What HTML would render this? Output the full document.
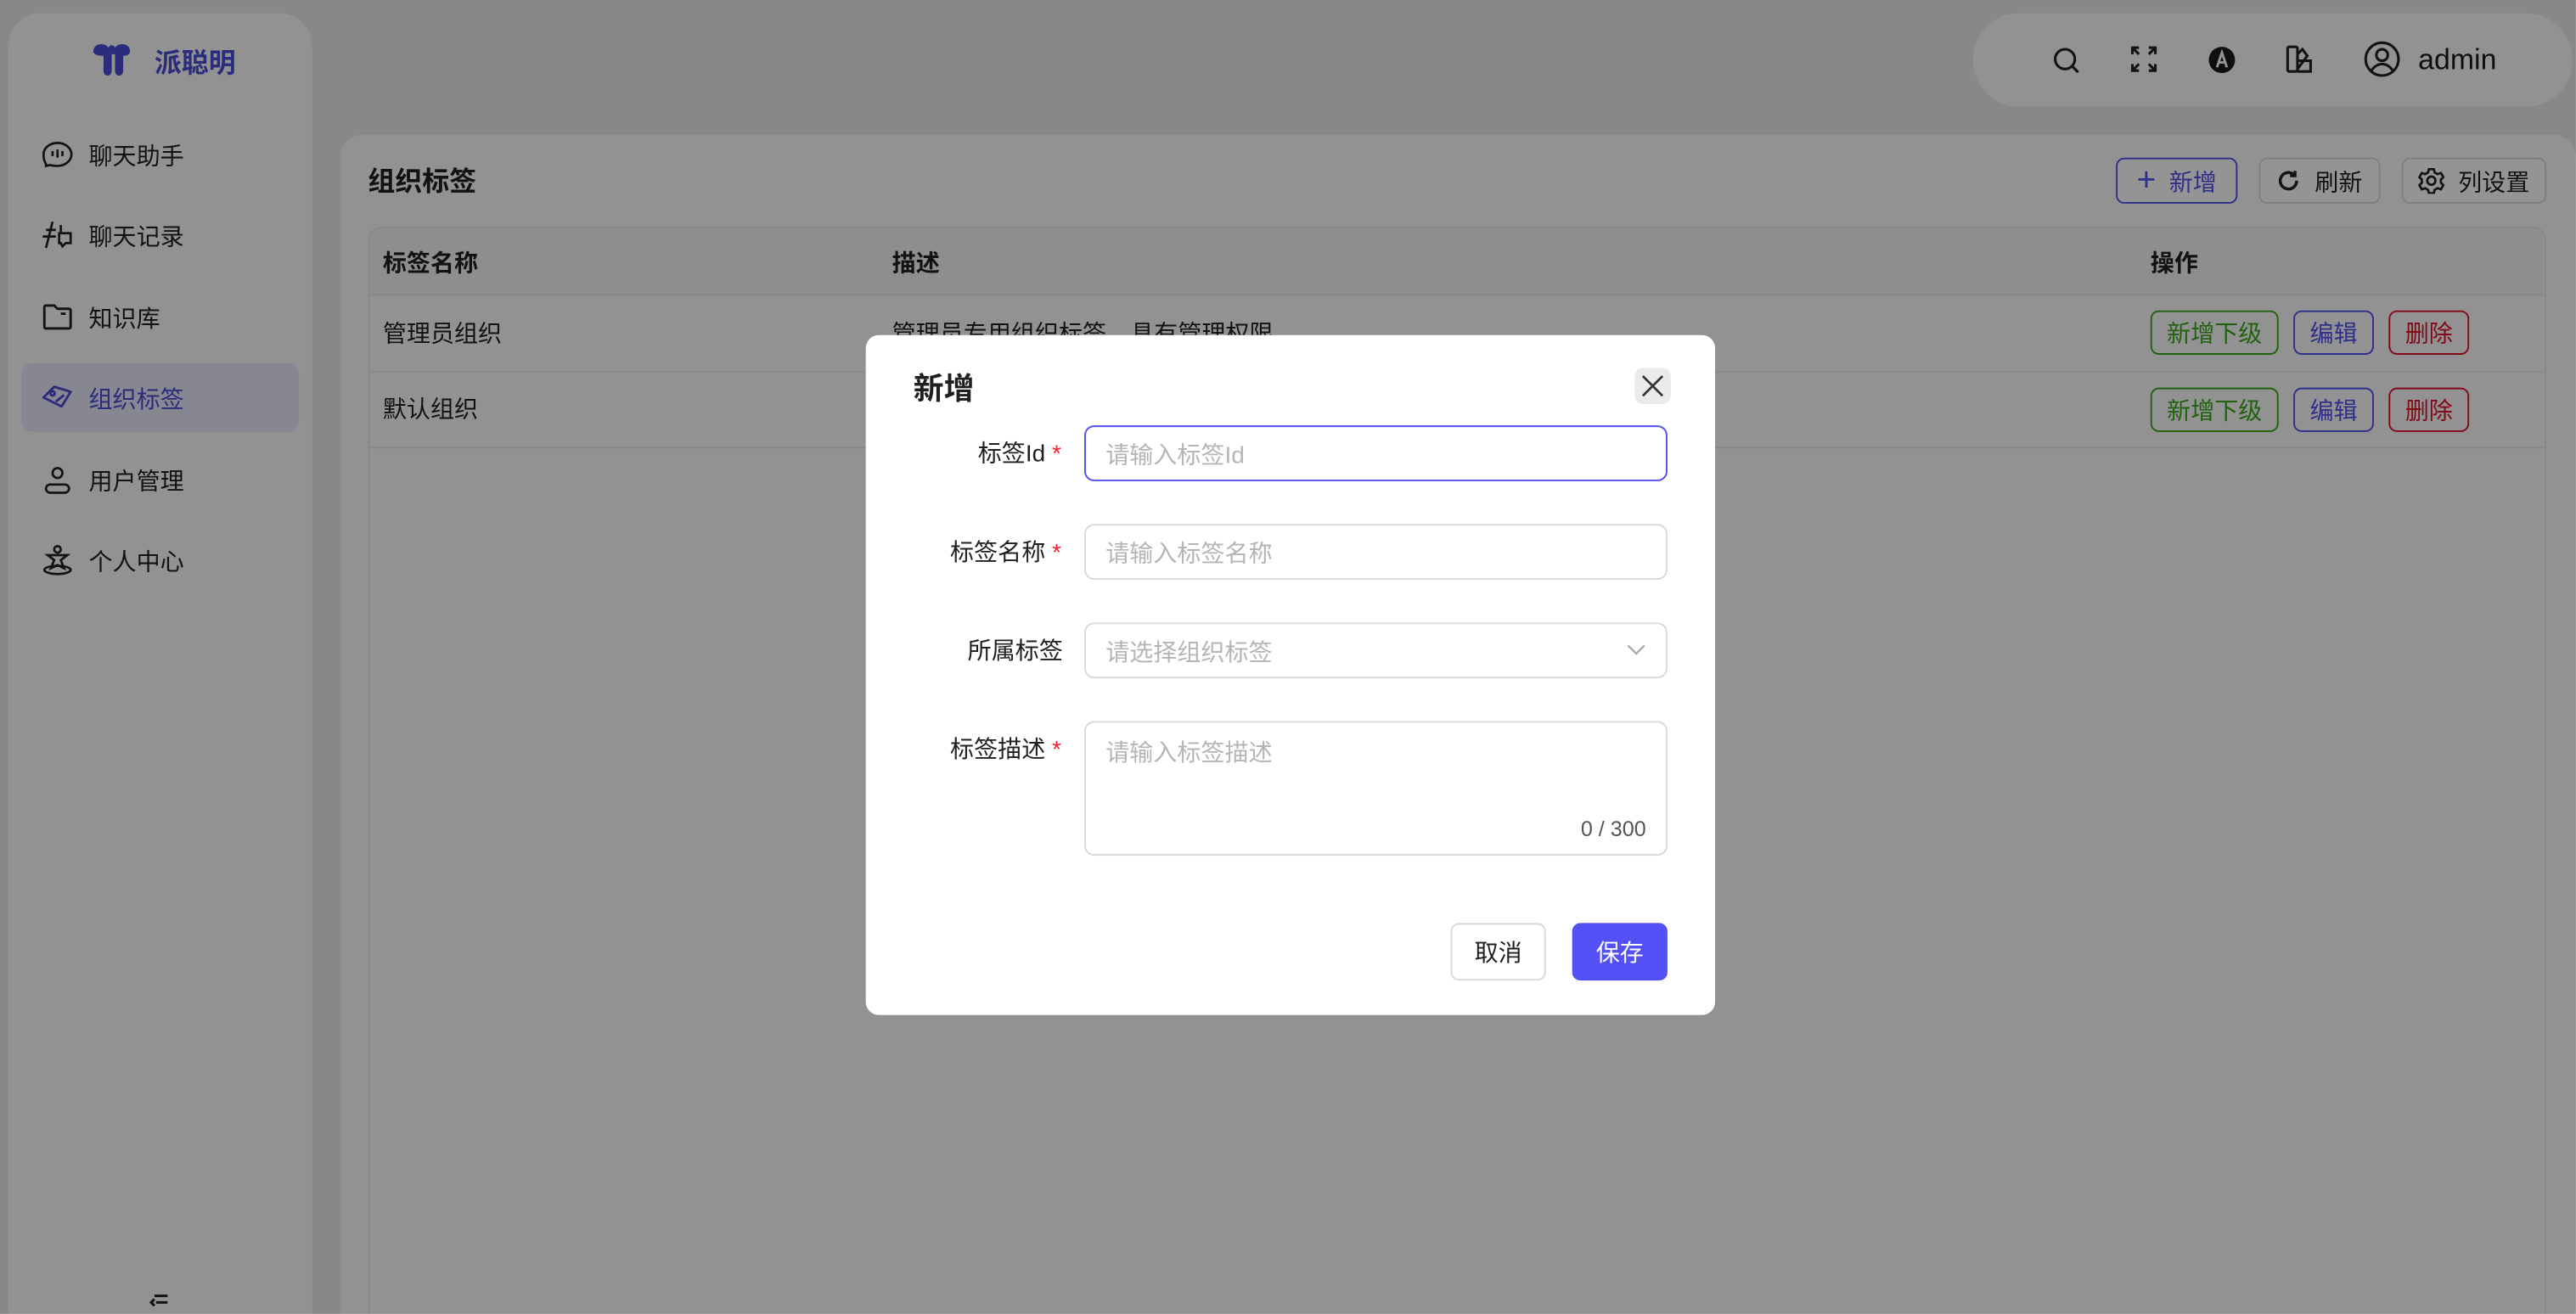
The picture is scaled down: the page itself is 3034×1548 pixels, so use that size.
<!DOCTYPE html>
<html><head><meta charset="utf-8"><style>
*{box-sizing:border-box;margin:0;padding:0}
html,body{width:3034px;height:1548px;overflow:hidden;background:#e9eaee}
body{font-family:"Liberation Sans","Noto Sans CJK SC",sans-serif;color:#1f1f1f;position:relative}
#w{position:absolute;left:0;top:0;width:1568px;height:800px;overflow:hidden;transform:scale(1.9349);transform-origin:0 0}
.a{position:absolute}
.side{left:5px;top:8px;width:185px;height:792px;background:#fcfcfc;border-radius:20px 20px 0 0}
.mi{position:absolute;left:20px;width:160px;height:42px;display:flex;align-items:center;font-size:14.5px}
.mi svg{width:20px;height:20px;margin-right:9px;flex:none}
.hdr{left:1201px;top:8px;width:365px;height:57px;background:#fcfcfc;border-radius:29px}
.card{left:207px;top:82px;width:1361px;height:718px;background:#fcfcfc;border-radius:14px 14px 0 0}
.btn{position:absolute;height:28px;border:1px solid #d9d9d9;border-radius:5px;display:flex;align-items:center;justify-content:center;font-size:14.5px;background:#fff}
.tb{left:224px;top:138px;width:1326px;height:662px;border:1px solid #eaeaea;border-bottom:none;border-radius:8px 8px 0 0;overflow:hidden}
.sb{position:absolute;height:27px;border:1px solid;border-radius:5px;font-size:14.5px;display:flex;align-items:center;justify-content:center}
.mask{left:0;top:0;width:1568px;height:800px;background:rgba(0,0,0,0.42)}
.modal{left:527px;top:204px;width:517px;height:414px;background:#fff;border-radius:8px}
.lb{position:absolute;right:398px;font-size:14.5px;text-align:right}
.lb i{color:#f5222d;font-style:normal;margin-left:4px}
.in{position:absolute;left:133px;width:355px;border:1px solid #d9d9d9;border-radius:6px;font-size:14.5px;color:#b5b5b5;padding-left:12px;display:flex;align-items:center}
</style></head><body><div id="w">
<div class="a side">
  <svg class="a" style="left:50px;top:17px" width="26" height="24" viewBox="0 0 26 24"><path d="M2 5c1-4 7-4 9-1 1-2 3-2 4 0 2-3 8-3 9 1 1 3-2 4-4 4v9c0 4-5 4-5 0V8h-2v10c0 4-5 4-5 0V9C4 9 1 8 2 5z" fill="#4b4fd6"/></svg>
  <div class="a" style="left:89px;top:17px;font-size:16.5px;font-weight:bold;color:#4b4fd6">派聪明</div>
  <div class="mi" style="top:65px"><svg viewBox="0 0 20 20" fill="none" stroke="#222" stroke-width="1.4"><path d="M3 16c-1-2-1.5-3-1.5-6 0-4 4-7 8.5-7s8.5 3 8.5 7-4 7-8.5 7c-2 0-3 0-4.5-.5L3 17z"/><path d="M7 8v3M10 7v5M13 8v3"/></svg>聊天助手</div>
  <div class="mi" style="top:114px"><svg viewBox="0 0 20 20" fill="none" stroke="#222" stroke-width="1.4"><path d="M1 11h8M3 7h6M7 2l-4 16"/><path d="M11 9h7v6h-3l-2 2-1-2h-1zM12 9V4"/></svg>聊天记录</div>
  <div class="mi" style="top:164px"><svg viewBox="0 0 20 20" fill="none" stroke="#222" stroke-width="1.5"><path d="M2 4a1 1 0 011-1h5l2 2h7a1 1 0 011 1v10a1 1 0 01-1 1H3a1 1 0 01-1-1z"/><path d="M12 8h3"/></svg>知识库</div>
  <div class="a" style="left:8px;top:213px;width:169px;height:42px;background:#e7e8f8;border-radius:7px"></div>
  <div class="mi" style="top:213px;color:#4b4fd6"><svg viewBox="0 0 20 20" fill="none" stroke="#4b4fd6" stroke-width="1.5"><path d="M1.5 10L8 3.5l10 3-5.5 9z" stroke-linejoin="round"/><circle cx="7" cy="7.5" r="1.3"/><path d="M9 12.5l5-4"/></svg>组织标签</div>
  <div class="mi" style="top:263px"><svg viewBox="0 0 20 20" fill="none" stroke="#222" stroke-width="1.4"><circle cx="10" cy="6" r="3"/><rect x="3" y="13" width="14" height="5" rx="2.5"/></svg>用户管理</div>
  <div class="mi" style="top:312px"><svg viewBox="0 0 20 20" fill="none" stroke="#222" stroke-width="1.4"><circle cx="10" cy="3.5" r="2"/><path d="M4 7h12l-4 3 2 5-4-2-4 2 2-5z"/><ellipse cx="10" cy="16" rx="8" ry="2.5"/></svg>个人中心</div>
  <svg class="a" style="left:85px;top:779px" width="14" height="12" viewBox="0 0 14 12" fill="none" stroke="#222" stroke-width="1.6"><path d="M4 2h8M5 6h7M4 4L2 6l2 2"/></svg>
</div>
<div class="a hdr">
  <svg class="a" style="left:48px;top:20px" width="18" height="18" viewBox="0 0 18 18" fill="none" stroke="#222" stroke-width="1.6"><circle cx="8" cy="8" r="6"/><path d="M12.5 12.5L16 16"/></svg>
  <svg class="a" style="left:96px;top:20px" width="16" height="16" viewBox="0 0 16 16" fill="none" stroke="#222" stroke-width="1.6"><path d="M1 5V1h4M1 1l4 4M15 5V1h-4M15 1l-4 4M1 11v4h4M1 15l4-4M15 11v4h-4M15 15l-4-4"/></svg>
  <svg class="a" style="left:143px;top:20px" width="17" height="17" viewBox="0 0 17 17"><circle cx="8.5" cy="8.5" r="8" fill="#1a1a1a"/><path d="M5.5 13L8.5 4l3 9M6.5 10h4" stroke="#fff" stroke-width="1.5" fill="none"/></svg>
  <svg class="a" style="left:190px;top:19px" width="18" height="18" viewBox="0 0 18 18" fill="none" stroke="#222" stroke-width="1.6"><rect x="1.5" y="1.5" width="6" height="15" rx="1"/><path d="M7.5 6l3-3 3 4-6 8M7.5 10h8v6.5h-8"/></svg>
  <svg class="a" style="left:238px;top:17px" width="22" height="22" viewBox="0 0 22 22" fill="none" stroke="#222" stroke-width="1.6"><circle cx="11" cy="11" r="10"/><circle cx="11" cy="8.5" r="3.5"/><path d="M4.5 18c2-3 4-4 6.5-4s4.5 1 6.5 4"/></svg>
  <div class="a" style="left:271px;top:18px;font-size:17.5px;color:#1a1a1a">admin</div>
</div>
<div class="a card"></div>
<div class="a" style="left:224px;top:97px;font-size:16.5px;font-weight:bold">组织标签</div>
<div class="btn" style="left:1288px;top:96px;width:74px;border-color:#5250ee;color:#5250ee"><span style="font-size:20px;margin-right:8px;line-height:1">+</span>新增</div>
<div class="btn" style="left:1375px;top:96px;width:74px"><svg width="14" height="14" viewBox="0 0 14 14" fill="none" stroke="#222" stroke-width="1.8" style="margin-right:9px"><path d="M12 7a5 5 0 11-1.5-3.5M11 1v3H8"/></svg>刷新</div>
<div class="btn" style="left:1462px;top:96px;width:88px"><svg width="16" height="16" viewBox="0 0 16 16" fill="none" stroke="#222" stroke-width="1.4" style="margin-right:8px"><circle cx="8" cy="8" r="2.5"/><path d="M6.5 1h3l.5 2 1.8 1 2-.7 1.5 2.6-1.5 1.4v2l1.5 1.4-1.5 2.6-2-.7-1.8 1-.5 2h-3l-.5-2-1.8-1-2 .7L.7 10.7 2.2 9.3v-2L.7 5.9l1.5-2.6 2 .7 1.8-1z"/></svg>列设置</div>
<div class="a tb">
  <div class="a" style="left:0;top:0;width:100%;height:41px;background:#f5f5f7;border-bottom:1px solid #eaeaea"></div>
  <div class="a" style="left:0;top:87px;width:100%;border-top:1px solid #eaeaea"></div>
  <div class="a" style="left:0;top:133px;width:100%;border-top:1px solid #eaeaea"></div>
  <div class="a" style="left:8px;top:10px;font-size:14.5px;font-weight:bold">标签名称</div>
  <div class="a" style="left:318px;top:10px;font-size:14.5px;font-weight:bold">描述</div>
  <div class="a" style="left:1084px;top:10px;font-size:14.5px;font-weight:bold">操作</div>
  <div class="a" style="left:8px;top:53px;font-size:14.5px">管理员组织</div>
  <div class="a" style="left:318px;top:53px;font-size:14.5px">管理员专用组织标签，具有管理权限</div>
  <div class="a" style="left:8px;top:99px;font-size:14.5px">默认组织</div>
  <div class="sb" style="left:1084px;top:50px;width:78px;color:#3aa71a;border-color:#3aa71a">新增下级</div>
  <div class="sb" style="left:1171px;top:50px;width:49px;color:#5250ee;border-color:#5250ee">编辑</div>
  <div class="sb" style="left:1229px;top:50px;width:49px;color:#e0102a;border-color:#e0102a">删除</div>
  <div class="sb" style="left:1084px;top:97px;width:78px;color:#3aa71a;border-color:#3aa71a">新增下级</div>
  <div class="sb" style="left:1171px;top:97px;width:49px;color:#5250ee;border-color:#5250ee">编辑</div>
  <div class="sb" style="left:1229px;top:97px;width:49px;color:#e0102a;border-color:#e0102a">删除</div>
</div>
<div class="a mask"></div>
<div class="a modal">
  <div class="a" style="left:29px;top:19px;font-size:18.5px;font-weight:bold">新增</div>
  <div class="a" style="left:468px;top:20px;width:22px;height:22px;background:#ebebeb;border-radius:5px"><svg width="22" height="22" viewBox="0 0 22 22" stroke="#333" stroke-width="1.4"><path d="M5 5l12 12M17 5L5 17"/></svg></div>
  <div class="lb" style="top:61px">标签Id<i>*</i></div>
  <div class="in" style="top:55px;height:34px;border-color:#5250ee">请输入标签Id</div>
  <div class="lb" style="top:121px">标签名称<i>*</i></div>
  <div class="in" style="top:115px;height:34px">请输入标签名称</div>
  <div class="lb" style="top:181px;right:397px">所属标签</div>
  <div class="in" style="top:175px;height:34px">请选择组织标签<svg class="a" style="right:12px;top:12px" width="12" height="8" viewBox="0 0 12 8" fill="none" stroke="#aaa" stroke-width="1.2"><path d="M1 1l5 5 5-5"/></svg></div>
  <div class="lb" style="top:241px">标签描述<i>*</i></div>
  <div class="in" style="top:235px;height:82px;align-items:flex-start;padding-top:7px">请输入标签描述<span class="a" style="right:12px;bottom:8px;font-size:13px;color:#555">0 / 300</span></div>
  <div class="btn" style="left:356px;top:358px;width:58px;height:35px">取消</div>
  <div class="btn" style="left:430px;top:358px;width:58px;height:35px;background:#5350f5;border-color:#5350f5;color:#fff">保存</div>
</div>
</div></body></html>
